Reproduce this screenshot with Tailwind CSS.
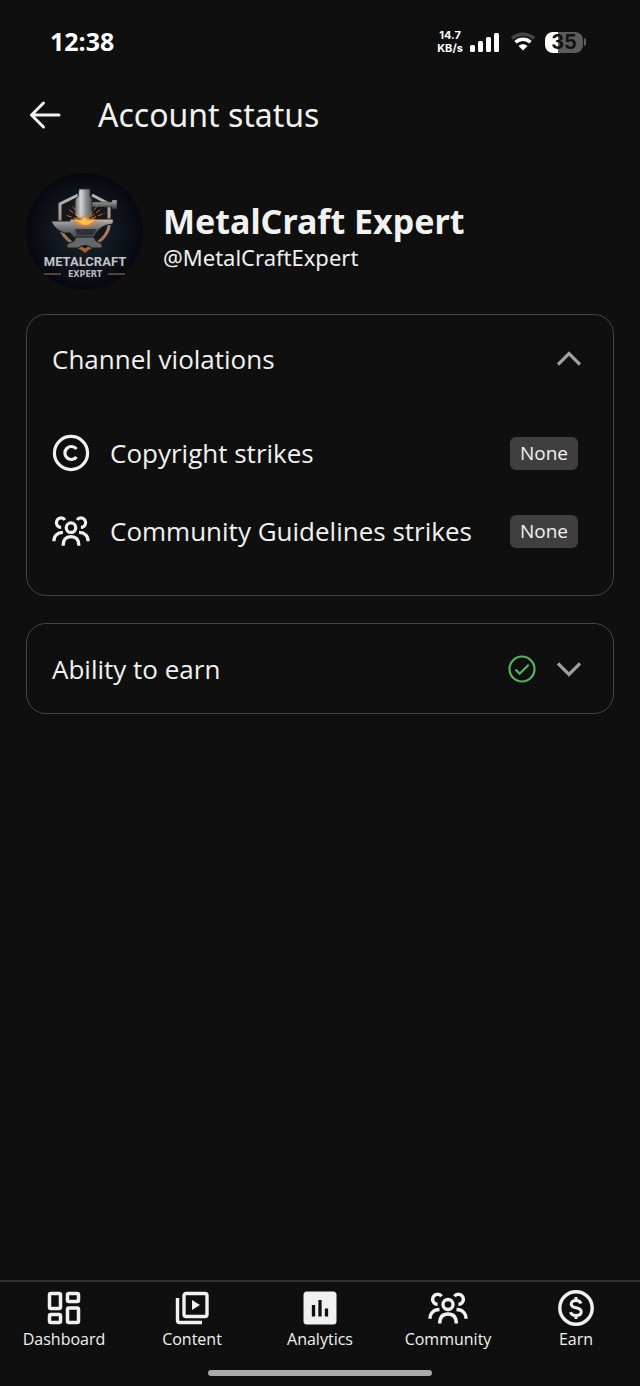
<!DOCTYPE html>
<html lang="en">
<head>
  <meta charset="UTF-8" />
  <title>Account status</title>
  <meta name="viewport" content="width=device-width, initial-scale=1" />
  <script src="https://cdn.jsdelivr.net/npm/@tailwindcss/browser@4"></script>
</head>
<body class="bg-[#0f0f0f] text-[#f1f1f1] min-h-screen flex flex-col font-['Open_Sans',sans-serif]">

  <!-- Shared icon, used in the list and in the tab bar -->
  <svg class="hidden">
    <symbol id="people" viewBox="0 0 40 40">
      <g fill="none" stroke="currentColor" stroke-width="3.4">
        <circle cx="20" cy="16.5" r="5" />
        <path d="M11.7 35.5c0-6.2 3-9.5 8.3-9.5s8.3 3.3 8.3 9.5" />
        <path d="M13.6 8.3A5 5 0 1 0 9.6 16.3M2 30.7c0-5.500 3.500-9 9.500-9.200" />
        <path d="M26.4 8.3A5 5 0 1 1 30.4 16.3M38 30.7c0-5.500-3.500-9-9.500-9.200" />
      </g>
    </symbol>
  </svg>

  <div class="h-[84px] pl-[50px] pr-[54px] flex items-center justify-between text-white">
    <span class="text-[25px] font-bold">12:38</span>
    <div class="flex items-center">
      <div class="w-7 mr-[6px] text-center text-[11px] leading-[13px] font-bold font-['Inter',sans-serif]">14.7<br />KB/s</div>
      <svg class="w-[29px] h-5 mr-3" viewBox="0 0 29 20" fill="#fff">
        <rect x="0" y="13" width="5" height="7" rx="1.5" />
        <rect x="8" y="9" width="5" height="11" rx="1.5" />
        <rect x="16" y="5" width="5" height="15" rx="1.5" />
        <rect x="24" y="1" width="5" height="19" rx="1.5" />
      </svg>
      <svg class="w-6 h-5 mr-[10px]" viewBox="0 0 24 20" fill="none" stroke-width="3.5">
        <path d="M1 6.500C7 .7 17 .7 23 6.500" stroke="#444" />
        <path d="M4.500 10.300c4.300-4 10.700-4 15 0" stroke="#fff" />
        <path d="M12 18.500l-4.500-4.600c2.700-2.300 6.300-2.300 9 0z" fill="#fff" />
      </svg>
      <div class="flex items-center">
        <div class="w-[38px] h-[21px] rounded-lg bg-linear-to-r from-white from-35% to-[#5c5c5c] to-35% text-[#111] text-xl leading-[21px] font-bold text-center font-['Inter',sans-serif]">35</div>
        <div class="w-[2px] h-2 ml-px rounded-r bg-[#5c5c5c]"></div>
      </div>
    </div>
  </div>

  <header class="h-[62px] px-[26px] flex items-center">
    <button type="button" aria-label="Back" class="w-[38px] h-10 flex items-center justify-center">
      <svg class="w-8 h-8" viewBox="0 0 32 32" fill="none" stroke="currentColor" stroke-width="3" stroke-linecap="round" stroke-linejoin="round">
        <path d="M14.5 4L2.5 16l12 12M2.5 16H30" />
      </svg>
    </button>
    <h1 class="ml-[34px] text-[32px] leading-10 font-['Noto_Sans',sans-serif]">Account status</h1>
  </header>

  <main class="grow px-[26px] pt-[27px]">
    <section class="flex items-center">
      <svg class="w-[117px] h-[117px] shrink-0" viewBox="0 0 117 117" role="img" aria-label="MetalCraft Expert logo">
        <defs>
          <radialGradient id="disc"><stop offset="0" stop-color="#1c232d" /><stop offset=".6" stop-color="#10151d" /><stop offset="1" stop-color="#05080e" /></radialGradient>
          <linearGradient id="steel" x2="0" y2="1"><stop offset="0" stop-color="#b4b5b8" /><stop offset=".45" stop-color="#77787c" /><stop offset="1" stop-color="#3c3d41" /></linearGradient>
          <linearGradient id="hammer"><stop offset="0" stop-color="#66686d" /><stop offset=".35" stop-color="#d5d6d9" /><stop offset=".65" stop-color="#8b8d92" /><stop offset="1" stop-color="#55565b" /></linearGradient>
          <linearGradient id="rim" x2="0" y2="1"><stop offset="0" stop-color="#b5b7ba" /><stop offset="1" stop-color="#96643f" /></linearGradient>
          <radialGradient id="glow"><stop offset="0" stop-color="#fff0a0" /><stop offset=".3" stop-color="#ff9d2e" stop-opacity=".8" /><stop offset="1" stop-color="#d65a10" stop-opacity="0" /></radialGradient>
        </defs>
        <circle cx="58.5" cy="58.5" r="58.5" fill="url(#disc)" />
        <path d="M52 22L34 31v22q2 14 25 24q22-10 24-24V31L66 22" fill="#15171b" stroke="url(#rim)" stroke-width="3" />
        <path d="M64 29h22v-2h5v9h-5v-2H64z" fill="url(#steel)" stroke="#222" stroke-width=".5" />
        <path d="M53 16h11v7l2 4v15l-4 4h-9l-4-4V27l3-4z" fill="url(#hammer)" stroke="#303136" />
        <path d="M25 48h19v-2h43v5q-12 1-17 9l-2 5H48l-4-5h-6q-9-3-13-12z" fill="url(#steel)" stroke="#191a1d" />
        <path d="M50 64h18l2 4 6 3v4H66q-7-5-14 0H41v-4l7-3z" fill="#66676b" stroke="#191a1d" />
        <path d="M46 48h41" stroke="#c9a98c" stroke-width="1.5" />
        <path d="M49 56h22l-4 6H51z" fill="#303136" />
        <ellipse cx="59" cy="49" rx="15" ry="7" fill="url(#glow)" />
        <path d="M59 48L42 36M59 48L46 33M59 48l16-12M59 48l13-16M59 48l20-8M59 48l-20-6" stroke="#ff9838" stroke-width=".7" stroke-dasharray="5 2" />
        <path d="M48 46l6 2 5-4 3 4 8-2-7 5-4 1-5-2z" fill="#ffc14e" />
        <path d="M54 76l5 4 5-4z" fill="#b15728" />
        <g text-anchor="middle" font-weight="bold">
          <text x="59" y="93" font-size="13" font-family="Roboto, sans-serif" fill="#c4c4c6">METALCRAFT</text>
          <text x="59" y="104" font-size="8" font-family="DejaVu Sans, sans-serif" fill="#b9b9bb">EXPERT</text>
        </g>
        <path d="M18 101h17M82 101h17" stroke="#a8795b" stroke-width="1" />
      </svg>
      <div class="ml-5 pt-[9px] font-['Noto_Sans',sans-serif]">
        <h2 class="text-[34px] leading-[42px] font-bold">MetalCraft Expert</h2>
        <p class="text-[22px] leading-[30px]">@MetalCraftExpert</p>
      </div>
    </section>

    <section class="mt-6 border border-[#454545] rounded-[20px] pl-[25px] pr-[26px] pb-[25px] text-[26px] leading-9">
      <button type="button" aria-expanded="true" class="w-full h-[88px] flex items-center justify-between text-left">
        <span>Channel violations</span>
        <svg class="w-6 h-6 mr-[6px]" viewBox="0 0 24 24" fill="none" stroke="#a0a0a0" stroke-width="3.2"><path d="M1 17.5L12 6.5l11 11" /></svg>
      </button>
      <ul class="pt-[11px]">
        <li class="h-[78px] flex items-center">
          <svg class="w-[38px] h-10 mr-5 shrink-0" viewBox="1 0 38 40" fill="none" stroke="currentColor" stroke-width="3.2">
            <circle cx="20" cy="20" r="16.6" />
            <path d="M25.500 16a6.500 6.500 0 1 0 0 8" />
          </svg>
          <span class="grow">Copyright strikes</span>
          <span class="w-[68px] h-[33px] mr-[9px] rounded-md bg-[#3f3f3f] text-center text-[19px] leading-[33px]">None</span>
        </li>
        <li class="h-[78px] flex items-center">
          <svg class="w-[38px] h-10 mr-5 shrink-0"><use href="#people" /></svg>
          <span class="grow">Community Guidelines strikes</span>
          <span class="w-[68px] h-[33px] mr-[9px] rounded-md bg-[#3f3f3f] text-center text-[19px] leading-[33px]">None</span>
        </li>
      </ul>
    </section>

    <section class="mt-[27px] border border-[#454545] rounded-[20px] pl-[25px] pr-[26px] text-[26px] leading-9">
      <button type="button" aria-expanded="false" class="w-full h-[89px] flex items-center text-left">
        <span class="grow">Ability to earn</span>
        <svg class="w-7 h-7 mr-[21px]" viewBox="0 0 28 28" fill="none" stroke="#55b25a" stroke-width="2.2">
          <circle cx="14" cy="14" r="12.500" />
          <path d="M7.500 14.500l4.200 4.200 9-9" />
        </svg>
        <svg class="w-6 h-6 mr-[6px]" viewBox="0 0 24 24" fill="none" stroke="#a0a0a0" stroke-width="3.2"><path d="M1 6.5l11 11 11-11" /></svg>
      </button>
    </section>
  </main>

  <nav class="border-t-2 border-[#303030] pt-[6px] grid grid-cols-5 text-base leading-[22px]">
    <a href="#dashboard" class="flex flex-col items-center">
      <svg class="w-10 h-10" viewBox="0 0 40 40" fill="none" stroke="currentColor" stroke-width="3.5">
        <rect x="5.5" y="5.5" width="11" height="15" rx="1.5" />
        <rect x="23.5" y="5.5" width="11" height="8" rx="1.5" />
        <rect x="5.5" y="26.5" width="11" height="8" rx="1.5" />
        <rect x="23.5" y="20" width="11" height="14.5" rx="1.5" />
      </svg>
      Dashboard
    </a>
    <a href="#content" class="flex flex-col items-center">
      <svg class="w-10 h-10" viewBox="0 0 40 40" fill="none" stroke="currentColor" stroke-width="3.4">
        <rect x="12" y="5.5" width="23" height="23" rx="2" />
        <path d="M5.500 10v22.500q0 2 2 2H30" />
        <path d="M20 12v10l8-5z" fill="currentColor" stroke="none" />
      </svg>
      Content
    </a>
    <a href="#analytics" aria-current="page" class="flex flex-col items-center">
      <svg class="w-10 h-10" viewBox="0 0 40 40">
        <rect x="3.5" y="3.5" width="33" height="33" rx="3.5" fill="currentColor" />
        <path d="M13.500 17v11.500M20 12v16.500M26.500 20.500v8" stroke="#0f0f0f" stroke-width="3.3" />
      </svg>
      Analytics
    </a>
    <a href="#community" class="flex flex-col items-center">
      <svg class="w-10 h-10"><use href="#people" /></svg>
      Community
    </a>
    <a href="#earn" class="flex flex-col items-center">
      <svg class="w-10 h-10" viewBox="0 0 40 40" fill="none" stroke="currentColor" stroke-width="3.4">
        <circle cx="20" cy="20" r="16.2" />
        <path d="M25 15.500c-.8-2.200-2.500-3-5-3-3 0-4.800 1.300-4.800 3.500 0 2.500 2 3.200 4.800 3.800s5.200 1.400 5.200 4-2.200 3.700-5.200 3.700c-2.800 0-4.800-1-5.400-3.300M20 9v4M20 27v4" stroke-width="3" />
      </svg>
      Earn
    </a>
  </nav>
  <div class="h-9 flex items-end justify-center pb-[10px]">
    <div class="w-56 h-[6px] rounded-full bg-[#a8a8a8]"></div>
  </div>

</body>
</html>
